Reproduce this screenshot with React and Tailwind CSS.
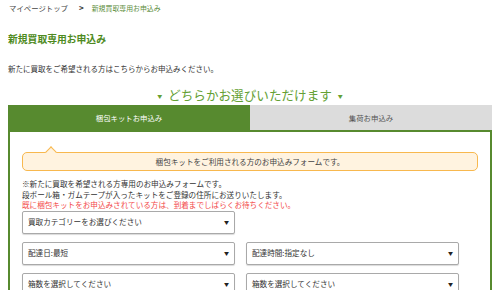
import React from "react";

const font = { fontFamily: '"Noto Sans CJK JP", "Noto Sans", sans-serif' };

const SelectBox = ({ label, className = "" }) => (
  <div
    className={
      "h-[23px] w-[213px] flex items-center justify-between pl-[5px] pr-[5px] border border-[#a9a9a9] rounded-[2px] bg-white shadow-[0_1px_1px_rgba(0,0,0,0.15)] text-[7.6px] text-[#333] " +
      className
    }
  >
    <span>{label}</span>
    <span className="text-[5px] text-[#222]">▼</span>
  </div>
);

const App = () => {
  return (
    <div className="w-[500px] h-[290px] overflow-hidden bg-white" style={font}>
      {/* breadcrumb */}
      <div className="h-[16px] flex items-center pl-[9px] text-[7.4px] text-[#444]">
        <span>マイページトップ</span>
        <span className="ml-[11px] text-[8px] font-bold text-[#333]">&gt;</span>
        <span className="ml-[8px] text-[6.9px] text-[#5c8e3c]">新規買取専用お申込み</span>
      </div>

      {/* title */}
      <div className="mt-[16px] pl-[8px] h-[14px] flex items-center text-[9.8px] font-bold text-[#4e8a21]">
        新規買取専用お申込み
      </div>

      <div className="mt-[18px] pl-[8px] h-[10px] flex items-center text-[7.5px] text-[#333]">
        新たに買取をご希望される方はこちらからお申込みください。
      </div>

      {/* heading */}
      <div className="mt-[13px] h-[16px] flex items-center justify-center text-[12.6px] text-[#64a033]">
        <span className="text-[5px] mr-[6px] mt-[2px]">▼</span>
        <span>どちらかお選びいただけます</span>
        <span className="text-[5px] ml-[6px] mt-[2px]">▼</span>
      </div>

      {/* tabs + panel */}
      <div className="mt-[2px] mx-[8px] w-[484px]">
        <div className="flex h-[25px] text-[7.4px]">
          <div className="w-[242px] bg-[#578a2f] text-white flex items-center justify-center">
            梱包キットお申込み
          </div>
          <div className="flex-1 bg-[#dcdcdc] text-[#555] flex items-center justify-center">
            集荷お申込み
          </div>
        </div>
        <div className="border-2 border-[#578a2f] bg-white px-[12px] pt-[20px] h-[200px]">
          <div className="relative h-[19px] border border-[#f8b84e] bg-[#fff3e0] rounded-[5px] flex items-center justify-center text-[7.6px] text-[#444]">
            <span className="absolute left-[24px] -top-[5px] w-[8px] h-[8px] bg-[#fff3e0] border-l border-t border-[#f8b84e] rotate-45"></span>
            梱包キットをご利用される方のお申込みフォームです。
          </div>
          <div className="mt-[8px] text-[7.6px] leading-[10.5px] text-[#333]">
            <div>※新たに買取を希望される方専用のお申込みフォームです。</div>
            <div>段ボール箱・ガムテープが入ったキットをご登録の住所にお送りいたします。</div>
            <div className="text-[#f34a4a]">既に梱包キットをお申込みされている方は、到着までしばらくお待ちください。</div>
          </div>
          <div className="mt-[0px]">
            <SelectBox label="買取カテゴリーをお選びください" />
          </div>
          <div className="mt-[8px] flex gap-[11px]">
            <SelectBox label="配達日:最短" />
            <SelectBox label="配達時間:指定なし" />
          </div>
          <div className="mt-[8px] flex gap-[11px]">
            <SelectBox label="箱数を選択してください" />
            <SelectBox label="箱数を選択してください" />
          </div>
        </div>
      </div>
    </div>
  );
};

export default App;
